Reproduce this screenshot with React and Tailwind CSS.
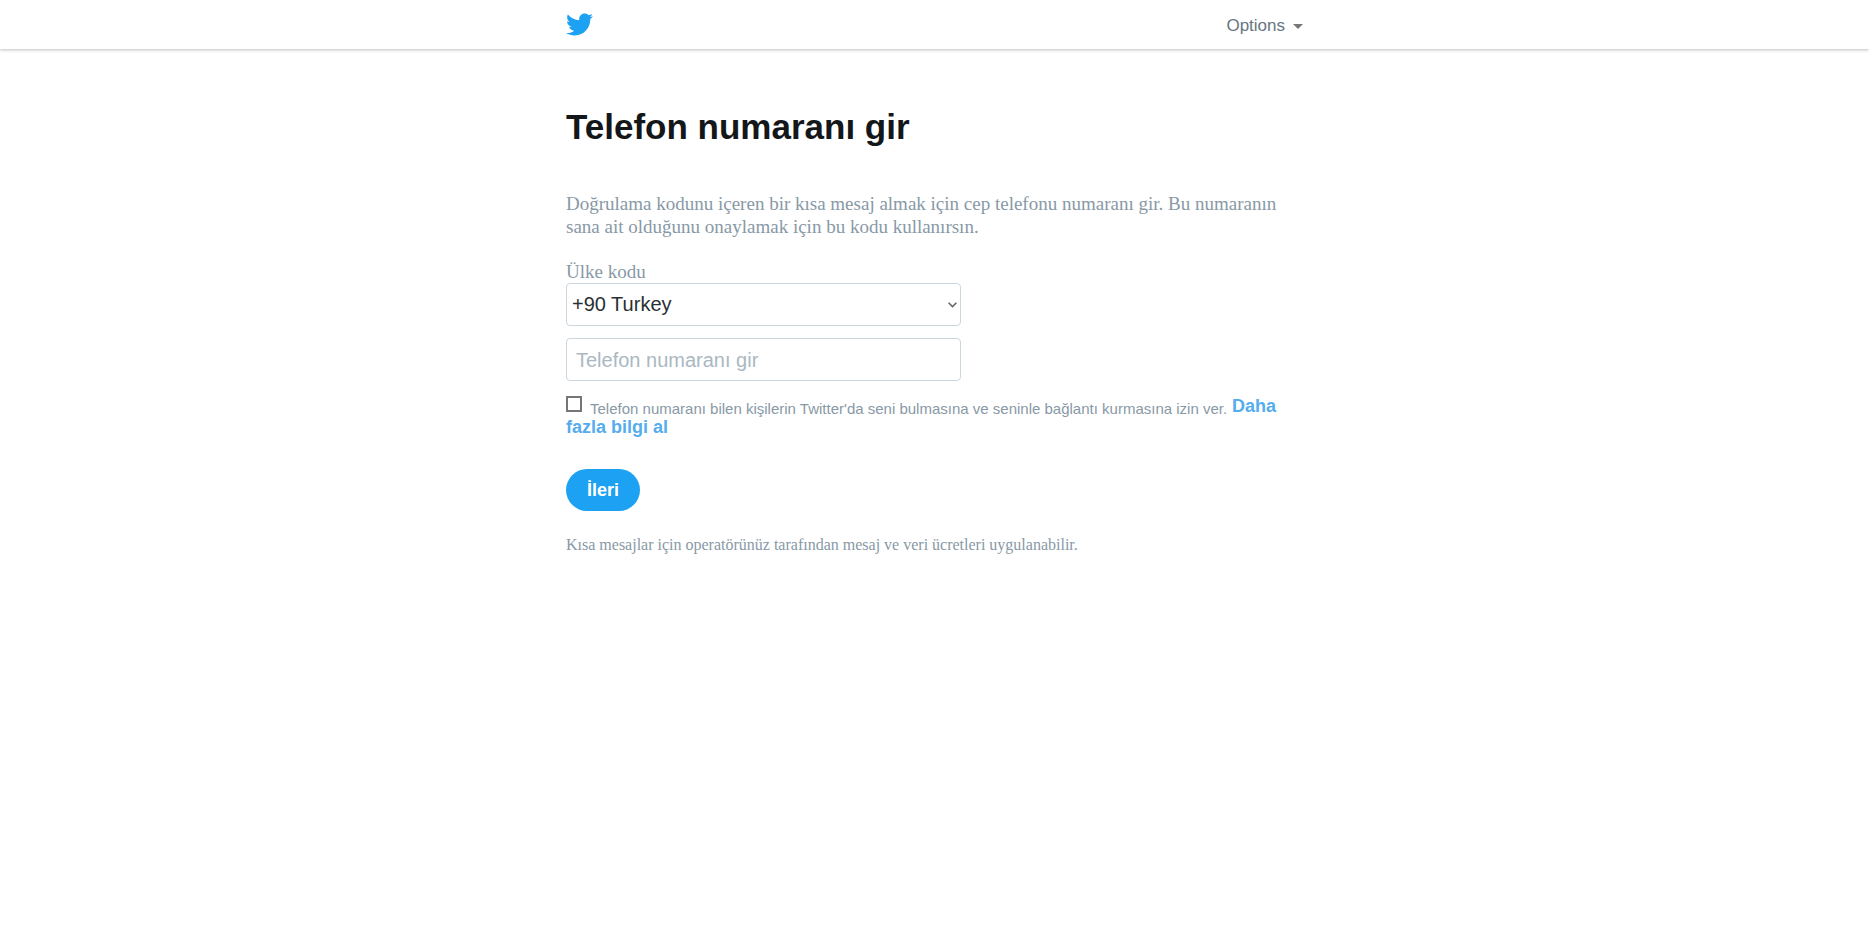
import { useState } from 'react';
import { FaTwitter } from 'react-icons/fa';

const countries = [
  { code: '+90', name: 'Turkey' },
  { code: '+49', name: 'Germany' },
  { code: '+44', name: 'United Kingdom' },
  { code: '+1', name: 'United States' },
];

function Header() {
  return (
    <header className="h-[49px] bg-white shadow-[0_1px_3px_rgba(0,0,0,0.25)]">
      <div className="mx-auto flex h-full w-full max-w-[737px] items-center justify-between">
        <a href="#home" aria-label="Twitter" className="text-[#1da1f2]">
          <FaTwitter size={27} />
        </a>
        <button type="button" className="flex items-center gap-2 pt-[2px] text-[17px] leading-6 text-[#66757f]">
          Options
          <svg width="10" height="5" viewBox="0 0 10 5" fill="#777" className="mt-px" aria-hidden="true">
            <path d="M0 0h10L5 5z" />
          </svg>
        </button>
      </div>
    </header>
  );
}

export default function App() {
  const [country, setCountry] = useState('+90');
  const [phone, setPhone] = useState('');
  const [discoverable, setDiscoverable] = useState(false);

  return (
    <div className="min-h-screen bg-white font-['Liberation_Sans',Arial,sans-serif] text-[#8899a6]">
      <Header />
      <main className="mx-auto w-full max-w-[737px] pt-14">
        <h1 className="text-[35px] leading-[44px] font-bold text-[#14171a]">Telefon numaranı gir</h1>

        <form onSubmit={(e) => e.preventDefault()}>
          <p className="mt-[43px] max-w-[720px] font-['Liberation_Serif',serif] text-[19px] leading-[23px]">
            Doğrulama kodunu içeren bir kısa mesaj almak için cep telefonu numaranı gir. Bu numaranın
            sana ait olduğunu onaylamak için bu kodu kullanırsın.
          </p>

          <label
            htmlFor="country"
            className="mt-[22px] block font-['Liberation_Serif',serif] text-[19px] leading-[23px]"
          >
            Ülke kodu
          </label>
          <div className="relative max-w-[395px]">
            <select
              id="country"
              value={country}
              onChange={(e) => setCountry(e.target.value)}
              className="block h-[43px] w-full appearance-none rounded-[4px] border border-[#ccd6dd] bg-white px-[5px] pb-[2px] text-[20px] text-[#292f33]"
            >
              {countries.map((c) => (
                <option key={c.code} value={c.code}>
                  {c.code} {c.name}
                </option>
              ))}
            </select>
            <svg
              width="9"
              height="6"
              viewBox="0 0 9 6"
              fill="none"
              stroke="#666"
              strokeWidth="1.6"
              className="pointer-events-none absolute top-[19px] right-[4px]"
              aria-hidden="true"
            >
              <path d="M0.6 0.8L4.5 4.6L8.4 0.8" />
            </svg>
          </div>

          <input
            type="tel"
            aria-label="Telefon numaranı gir"
            placeholder="Telefon numaranı gir"
            value={phone}
            onChange={(e) => setPhone(e.target.value)}
            className="mt-3 block h-[43px] w-full max-w-[395px] rounded-[4px] border border-[#ccd6dd] bg-white px-[9px] pt-[2px] text-[20px] text-[#292f33] placeholder:text-[#aab8c2]"
          />

          <div className="mt-[15px] max-w-[720px] text-[18px] leading-5">
            <input
              id="discoverable"
              type="checkbox"
              checked={discoverable}
              onChange={(e) => setDiscoverable(e.target.checked)}
              className="mr-2 size-4 appearance-none border-2 border-[#767676] bg-white align-baseline checked:bg-[#1da1f2]"
            />
            <label htmlFor="discoverable" className="align-[-2px] text-[15px] leading-4">
              Telefon numaranı bilen kişilerin Twitter'da seni bulmasına ve seninle bağlantı kurmasına izin ver.
            </label>{' '}
            <a href="#more" className="font-bold text-[#55acee]">
              Daha fazla bilgi al
            </a>
          </div>

          <button
            type="submit"
            className="mt-8 h-[42px] rounded-full bg-[#1da1f2] px-[21px] text-[18px] leading-5 font-bold text-white"
          >
            İleri
          </button>
        </form>

        <p className="mt-6 font-['Liberation_Serif',serif] text-[16px] leading-5">
          Kısa mesajlar için operatörünüz tarafından mesaj ve veri ücretleri uygulanabilir.
        </p>
      </main>
    </div>
  );
}
